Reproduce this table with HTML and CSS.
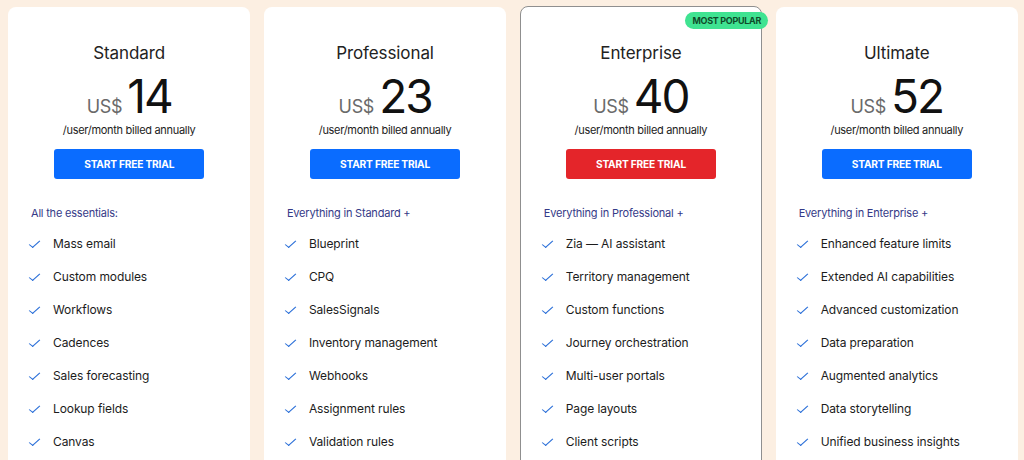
FILE: index.html
```html
<!DOCTYPE html>
<html lang="en">
<head>
<meta charset="utf-8">
<title>Pricing</title>
<link rel="stylesheet" href="styles.css">
</head>
<body>
<main class="plans">
  <section class="card">
    <h2 class="plan-name">Standard</h2>
    <div class="price"><span class="cur">US$</span><span class="amount">14</span></div>
    <p class="billing">/user/month billed annually</p>
    <a class="btn" href="#">START FREE TRIAL</a>
    <p class="includes">All the essentials:</p>
    <ul class="features">
      <li>Mass email</li>
      <li>Custom modules</li>
      <li>Workflows</li>
      <li>Cadences</li>
      <li>Sales forecasting</li>
      <li>Lookup fields</li>
      <li>Canvas</li>
    </ul>
  </section>
  <section class="card">
    <h2 class="plan-name">Professional</h2>
    <div class="price"><span class="cur">US$</span><span class="amount">23</span></div>
    <p class="billing">/user/month billed annually</p>
    <a class="btn" href="#">START FREE TRIAL</a>
    <p class="includes">Everything in Standard +</p>
    <ul class="features">
      <li>Blueprint</li>
      <li>CPQ</li>
      <li>SalesSignals</li>
      <li>Inventory management</li>
      <li>Webhooks</li>
      <li>Assignment rules</li>
      <li>Validation rules</li>
    </ul>
  </section>
  <section class="card card-popular">
    <span class="badge">MOST POPULAR</span>
    <h2 class="plan-name">Enterprise</h2>
    <div class="price"><span class="cur">US$</span><span class="amount">40</span></div>
    <p class="billing">/user/month billed annually</p>
    <a class="btn btn-red" href="#">START FREE TRIAL</a>
    <p class="includes">Everything in Professional +</p>
    <ul class="features">
      <li>Zia — AI assistant</li>
      <li>Territory management</li>
      <li>Custom functions</li>
      <li>Journey orchestration</li>
      <li>Multi-user portals</li>
      <li>Page layouts</li>
      <li>Client scripts</li>
    </ul>
  </section>
  <section class="card">
    <h2 class="plan-name">Ultimate</h2>
    <div class="price"><span class="cur">US$</span><span class="amount">52</span></div>
    <p class="billing">/user/month billed annually</p>
    <a class="btn" href="#">START FREE TRIAL</a>
    <p class="includes">Everything in Enterprise +</p>
    <ul class="features">
      <li>Enhanced feature limits</li>
      <li>Extended AI capabilities</li>
      <li>Advanced customization</li>
      <li>Data preparation</li>
      <li>Augmented analytics</li>
      <li>Data storytelling</li>
      <li>Unified business insights</li>
    </ul>
  </section>
</main>
</body>
</html>
```

FILE: styles.css
```css
* { box-sizing: border-box; }
html, body {
  margin: 0;
  padding: 0;
  background: #fcefe2;
  height: 460px;
  overflow: hidden;
}
body {
  font-family: Inter, "Noto Sans", "Liberation Sans", sans-serif;
  color: #222;
}
.plans {
  display: grid;
  grid-template-columns: repeat(4, 1fr);
  gap: 13.5px;
  padding: 7px 6px 0 8px;
}
.card {
  position: relative;
  background: #fff;
  border-radius: 8px;
  height: 470px;
  padding-top: 35px;
  display: flex;
  flex-direction: column;
  align-items: center;
}
.card-popular {
  border: 1px solid #8f8f8f;
  margin-top: -1px;
  padding-top: 35px;
}
.badge {
  position: absolute;
  top: 5px;
  right: -7px;
  background: #3fe391;
  color: #0f4a2a;
  font-size: 9px;
  font-weight: 700;
  letter-spacing: -0.3px;
  padding: 4px 7px 3px;
  border-radius: 9px;
  line-height: 10px;
}
.plan-name {
  margin: 0;
  font-size: 17px;
  font-weight: 400;
  line-height: 22px;
  letter-spacing: -0.1px;
}
.price {
  display: flex;
  align-items: baseline;
  margin-top: 8px;
  height: 48px;
}
.cur {
  font-size: 18px;
  color: #6a6a6a;
  margin-right: 5px;
  letter-spacing: -0.3px;
}
.amount {
  font-size: 46px;
  line-height: 48px;
  letter-spacing: -2px;
  color: #111;
}
.billing {
  margin: 3px 0 0;
  font-size: 11px;
  line-height: 14px;
  letter-spacing: -0.3px;
}
.btn {
  display: flex;
  align-items: center;
  justify-content: center;
  width: 150px;
  height: 30px;
  margin-top: 12px;
  background: #0a6cff;
  color: #fff;
  text-decoration: none;
  font-size: 10.2px;
  font-weight: 700;
  letter-spacing: -0.2px;
  border-radius: 3px;
}
.btn-red { background: #e4252a; }
.includes {
  align-self: stretch;
  margin: 27px 0 0;
  padding-left: 23px;
  font-size: 11px;
  line-height: 14px;
  color: #353a87;
  letter-spacing: -0.2px;
}
.features {
  align-self: stretch;
  list-style: none;
  margin: 16px 0 0;
  padding: 0 0 0 23px;
}
.features li {
  position: relative;
  height: 33px;
  line-height: 16px;
  padding-left: 22px;
  font-size: 12px;
  letter-spacing: -0.1px;
  color: #1c1c1c;
}
.features li::before {
  content: "";
  position: absolute;
  left: 1px;
  top: 2px;
  width: 4px;
  height: 9px;
  border-right: 1.5px solid #2a6fd8;
  border-bottom: 1.5px solid #2a6fd8;
  transform: rotate(38deg) skewX(-10deg);
}
```
